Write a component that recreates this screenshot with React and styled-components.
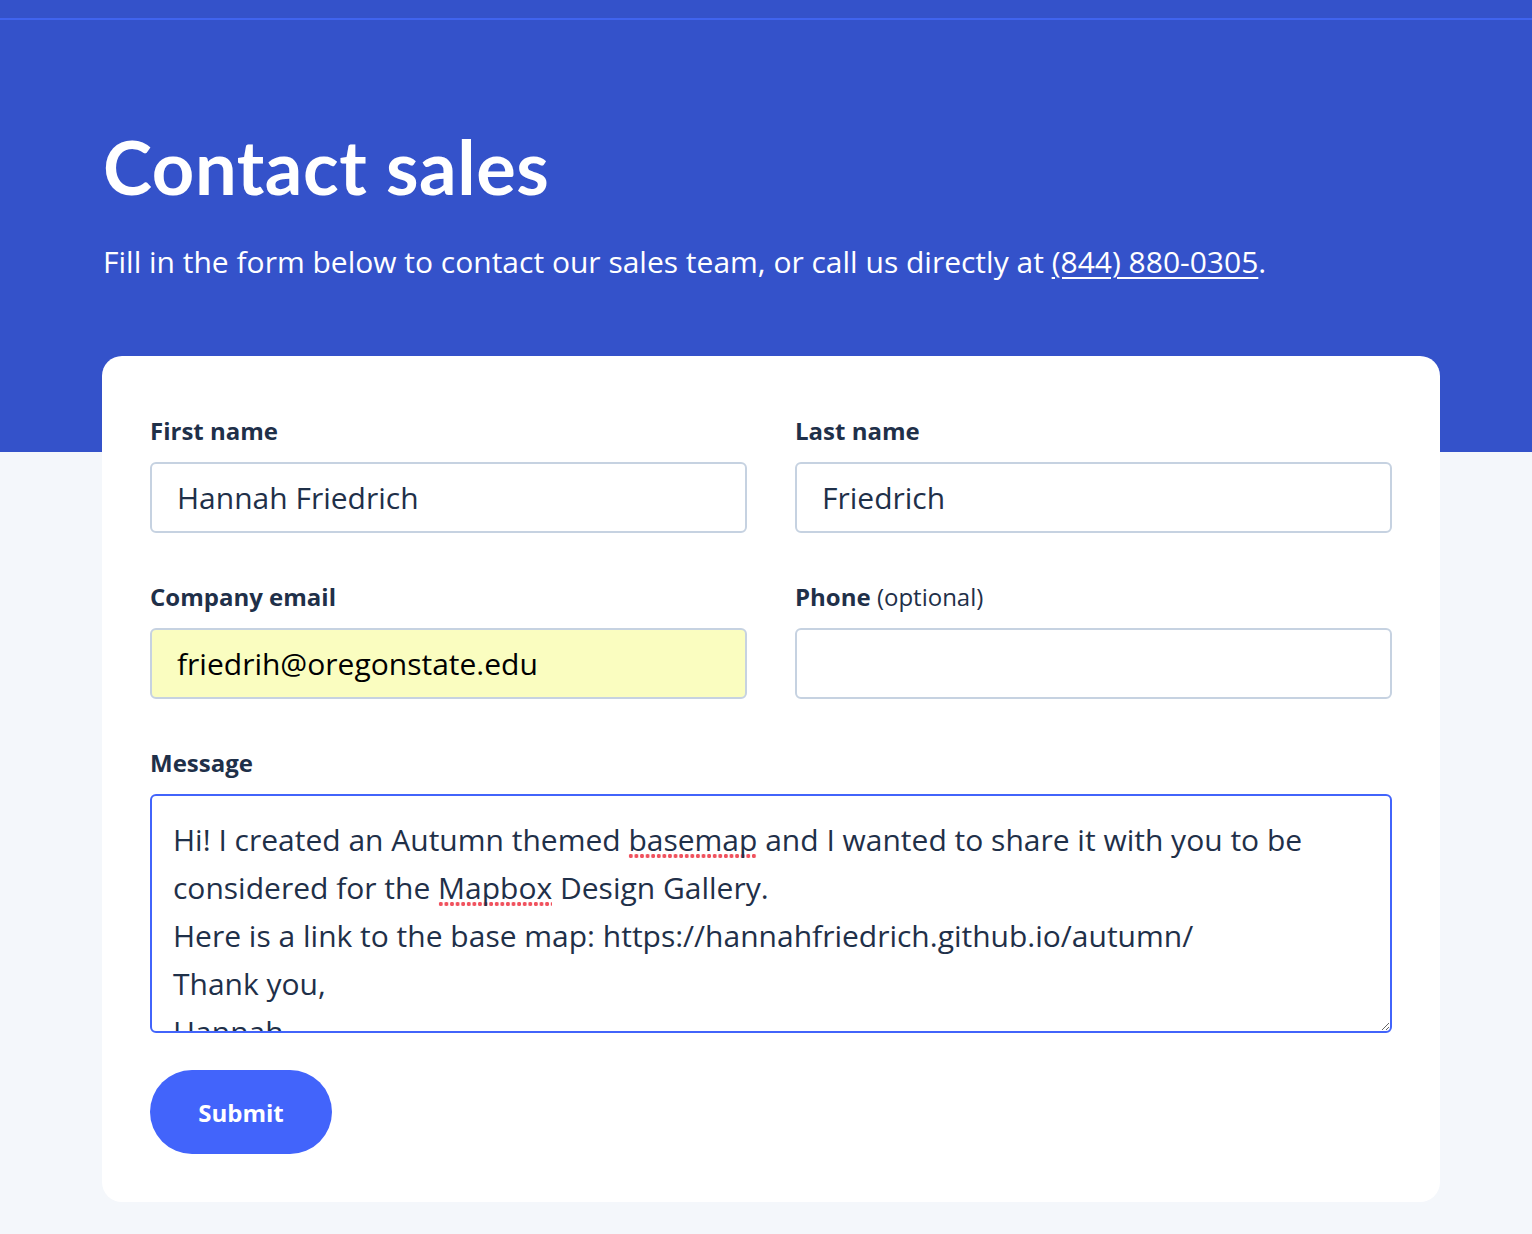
import React from 'react';
import styled, { createGlobalStyle } from 'styled-components';

const GlobalStyle = createGlobalStyle`
  html, body {
    margin: 0;
    padding: 0;
    background: #f4f7fb;
  }
  body {
    font-family: 'Open Sans', 'Liberation Sans', sans-serif;
    color: #1f3049;
  }
`;

const Page = styled.div`
  min-height: 1234px;
  background: #f4f7fb;
`;

const Hero = styled.header`
  background: #3452ca;
  padding-bottom: 96px;
`;

const TopLine = styled.div`
  height: 18px;
  border-bottom: 2px solid #4064ef;
`;

const HeroInner = styled.div`
  padding: 107px 103px 74px;
`;

const Title = styled.h1`
  margin: 0;
  font-family: 'Lato', 'Liberation Sans', sans-serif;
  font-weight: 700;
  font-size: 74px;
  line-height: 80px;
  color: #fff;
  letter-spacing: 0.6px;
`;

const Lead = styled.p`
  margin: 35px 0 0;
  font-size: 30px;
  line-height: 40px;
  color: #fff;

  a {
    color: #fff;
    text-decoration: underline;
    text-decoration-thickness: 2px;
    text-underline-offset: 4px;
  }
`;

const Card = styled.form`
  margin: -96px 92px 0 102px;
  background: #fff;
  border-radius: 20px;
  padding: 60px 48px 48px;
  display: grid;
  grid-template-columns: 1fr 1fr;
  column-gap: 48px;
  row-gap: 49px;
`;

const Field = styled.div`
  display: flex;
  flex-direction: column;
  gap: 16px;
  grid-column: ${(p) => (p.$wide ? '1 / -1' : 'auto')};
`;

const Label = styled.label`
  font-size: 24px;
  line-height: 30px;
  font-weight: 700;
  color: #1f3049;

  span {
    font-weight: 400;
  }
`;

const Input = styled.div`
  box-sizing: border-box;
  height: 71px;
  border: 2px solid ${(p) => (p.$focus ? '#4264fb' : '#c6d2e1')};
  border-radius: 6px;
  background: ${(p) => (p.$autofill ? '#fafdc0' : '#fff')};
  padding: 0 25px;
  display: flex;
  align-items: center;
  font-size: 30px;
  color: ${(p) => (p.$autofill ? '#000' : '#1f3049')};
`;

const TextArea = styled.div`
  box-sizing: border-box;
  height: 239px;
  border: 2px solid #4264fb;
  border-radius: 6px;
  padding: 20px 20px 20px 21px;
  font-size: 30px;
  line-height: 48px;
  color: #1f3049;
  overflow: hidden;
  resize: both;
  white-space: pre-wrap;
`;

const Misspelled = styled.span`
  background-image: radial-gradient(circle, #f0525e 1.8px, transparent 2.4px);
  background-size: 5.6px 6px;
  background-repeat: repeat-x;
  background-position: 0 calc(100% - 1px);
`;

const Actions = styled.div`
  grid-column: 1 / -1;
  margin-top: -12px;
`;

const SubmitButton = styled.button`
  width: 182px;
  height: 84px;
  border: none;
  border-radius: 42px;
  background: #4264fb;
  color: #fff;
  font-family: 'Open Sans', 'Liberation Sans', sans-serif;
  font-weight: 700;
  font-size: 24px;
  cursor: pointer;
`;

export default function App() {
  return (
    <Page>
      <GlobalStyle />
      <Hero>
        <TopLine />
        <HeroInner>
          <Title>Contact sales</Title>
          <Lead>
            Fill in the form below to contact our sales team, or call us directly at{' '}
            <a href="#">(844) 880-0305</a>.
          </Lead>
        </HeroInner>
      </Hero>
      <Card onSubmit={(e) => e.preventDefault()}>
        <Field>
          <Label>First name</Label>
          <Input>Hannah Friedrich</Input>
        </Field>
        <Field>
          <Label>Last name</Label>
          <Input>Friedrich</Input>
        </Field>
        <Field>
          <Label>Company email</Label>
          <Input $autofill>friedrih@oregonstate.edu</Input>
        </Field>
        <Field>
          <Label>
            Phone <span>(optional)</span>
          </Label>
          <Input />
        </Field>
        <Field $wide>
          <Label>Message</Label>
          <TextArea>
            Hi! I created an Autumn themed <Misspelled>basemap</Misspelled> and I wanted to share it with you to be
            considered for the <Misspelled>Mapbox</Misspelled> Design Gallery.{'\n'}Here is a link to the base map:
            https://hannahfriedrich.github.io/autumn/{'\n'}Thank you,{'\n'}Hannah
          </TextArea>
        </Field>
        <Actions>
          <SubmitButton type="submit">Submit</SubmitButton>
        </Actions>
      </Card>
    </Page>
  );
}
